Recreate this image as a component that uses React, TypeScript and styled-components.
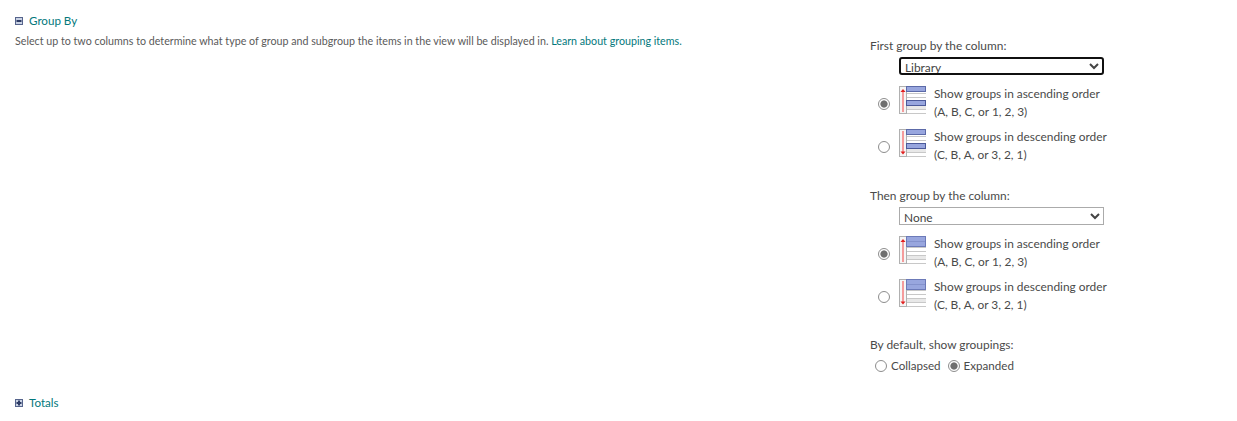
import React from 'react';
import styled, { createGlobalStyle } from 'styled-components';

const GlobalStyle = createGlobalStyle`
  html, body {
    margin: 0;
    background: #ffffff;
    font-family: Lato, "Open Sans", sans-serif;
    font-size: 11.9px;
    color: #4a4a4a;
  }
`;

const Page = styled.div`
  width: 1237px;
  height: 421px;
  overflow: hidden;
  box-sizing: border-box;
  padding: 12px 0 0 15px;
`;

const SectionHead = styled.div`
  display: flex;
  align-items: center;
  gap: 6px;
  height: 17px;
  font-size: 11.6px;
  color: #03787c;
`;

const Columns = styled.div`
  display: grid;
  grid-template-columns: 855px 240px;
  height: 365px;
`;

const Description = styled.p`
  margin: 3px 0 0;
  line-height: 17px;
  font-size: 10.7px;
  color: #5a5a5a;
`;

const DocLink = styled.a`
  color: #03787c;
  text-decoration: none;
`;

const Fields = styled.div`
  display: flex;
  flex-direction: column;
  padding-top: 8px;
`;

const FieldLabel = styled.div<{ $gap?: number }>`
  height: 17px;
  line-height: 17px;
  margin-top: ${p => p.$gap ?? 0}px;
`;

const SelectRow = styled.div`
  padding: 3px 0 0 29px;
`;

const ColumnSelect = styled.select<{ $focused?: boolean }>`
  display: block;
  width: 205px;
  height: 18px;
  box-sizing: border-box;
  padding: ${p => (p.$focused ? '0' : '1px 0 0')};
  font-family: inherit;
  font-size: 11.9px;
  line-height: 14px;
  color: #444444;
  background: #ffffff;
  border: ${p => (p.$focused ? '2px solid #101010' : '1px solid #ababab')};
  border-radius: ${p => (p.$focused ? '3px' : '0')};
  outline: none;
`;

const OrderOption = styled.div`
  display: grid;
  grid-template-columns: 29px 28px 1fr;
  align-items: center;
  height: 43px;
`;

const OptionList = styled.div`
  padding-top: 6px;
  margin-bottom: 18px;
`;

const OrderText = styled.div`
  padding-left: 7px;
  line-height: 18px;
  white-space: nowrap;
`;

const Radio = styled.span<{ $checked?: boolean }>`
  display: block;
  width: 10px;
  height: 10px;
  border: 1px solid #8d8d8d;
  border-radius: 50%;
  background: ${p =>
    p.$checked
      ? 'radial-gradient(circle, #6f6f6f 0, #6f6f6f 3.2px, #ffffff 4px)'
      : '#ffffff'};
`;

const OrderRadio = styled(Radio)`
  margin: 3px 0 0 8px;
`;

const DefaultRow = styled.div`
  display: flex;
  align-items: center;
  gap: 4px;
  padding: 4px 0 0 5px;
  height: 17px;
  line-height: 17px;
  font-size: 11.6px;
`;

const DefaultChoice = styled.span`
  margin-right: 3px;
`;

const ToggleIcon = ({ open }: { open: boolean }) => (
  <svg width="8" height="8" viewBox="0 0 8 8">
    <rect x="0.5" y="0.5" width="7" height="7" fill="#c9d2e4" stroke="#56648c" />
    <rect x="1.5" y="3" width="5" height="2" fill="#2e3c66" />
    {!open && <rect x="3" y="1.5" width="2" height="5" fill="#2e3c66" />}
  </svg>
);

// grid glyph: red arrow on the left, highlighted group rows on the right
const OrderIcon = ({ down, sub }: { down?: boolean; sub?: boolean }) => (
  <svg width="28" height="29" viewBox="0 0 28 29" style={{ marginTop: -5 }}>
    <rect x="0.5" y="0.5" width="7" height="27" fill="#f6f6f6" stroke="#b0b0b0" />
    {[7, 11, 15, 19, 23, 27].map(y => (
      <line key={y} x1="8" x2="27" y1={y + 0.5} y2={y + 0.5} stroke="#c8c8c8" />
    ))}
    <rect x="8" y="20" width="19" height="3" fill="#e8e8e8" />
    {sub ? (
      <>
        <rect x="7.5" y="0.5" width="19" height="5" fill="#98a6de" stroke="#5c6aa8" />
        <rect x="7.5" y="14.5" width="19" height="5" fill="#98a6de" stroke="#4c5a9a" />
      </>
    ) : (
      <>
        <rect x="7.5" y="0.5" width="19" height="10" fill="#98a6de" stroke="#6c7ab8" />
        <line x1="8" x2="26" y1="5.5" y2="5.5" stroke="#8492cc" />
      </>
    )}
    <line
      x1="4"
      x2="4"
      y1={down ? 2 : 6}
      y2={down ? 23 : 26}
      stroke="#f59292"
      strokeWidth="1.8"
    />
    {down ? (
      <polygon points="1.5,22.5 6.5,22.5 4,25.5" fill="#e02020" />
    ) : (
      <polygon points="1.5,6 6.5,6 4,3" fill="#e02020" />
    )}
  </svg>
);

const OrderChoice = ({ checked, down, sub }: { checked?: boolean; down?: boolean; sub?: boolean }) => (
  <OrderOption>
    <OrderRadio $checked={checked} />
    <OrderIcon down={down} sub={sub} />
    <OrderText>
      Show groups in {down ? 'descending' : 'ascending'} order
      <br />
      {down ? '(C, B, A, or 3, 2, 1)' : '(A, B, C, or 1, 2, 3)'}
    </OrderText>
  </OrderOption>
);

const App = () => (
  <Page>
    <GlobalStyle />
    <SectionHead>
      <ToggleIcon open />
      Group By
    </SectionHead>
    <Columns>
      <Description>
        Select up to two columns to determine what type of group and subgroup the items in the view will be
        displayed in. <DocLink href="#">Learn about grouping items.</DocLink>
      </Description>
      <Fields>
        <FieldLabel>First group by the column:</FieldLabel>
        <SelectRow>
          <ColumnSelect $focused defaultValue="Library">
            <option>Library</option>
          </ColumnSelect>
        </SelectRow>
        <OptionList>
          <OrderChoice checked sub />
          <OrderChoice down sub />
        </OptionList>
        <FieldLabel $gap={2}>Then group by the column:</FieldLabel>
        <SelectRow>
          <ColumnSelect defaultValue="None">
            <option>None</option>
          </ColumnSelect>
        </SelectRow>
        <OptionList>
          <OrderChoice checked />
          <OrderChoice down />
        </OptionList>
        <FieldLabel $gap={1}>By default, show groupings:</FieldLabel>
        <DefaultRow>
          <Radio />
          <DefaultChoice>Collapsed</DefaultChoice>
          <Radio $checked />
          <DefaultChoice>Expanded</DefaultChoice>
        </DefaultRow>
      </Fields>
    </Columns>
    <SectionHead>
      <ToggleIcon open={false} />
      Totals
    </SectionHead>
  </Page>
);

export default App;
